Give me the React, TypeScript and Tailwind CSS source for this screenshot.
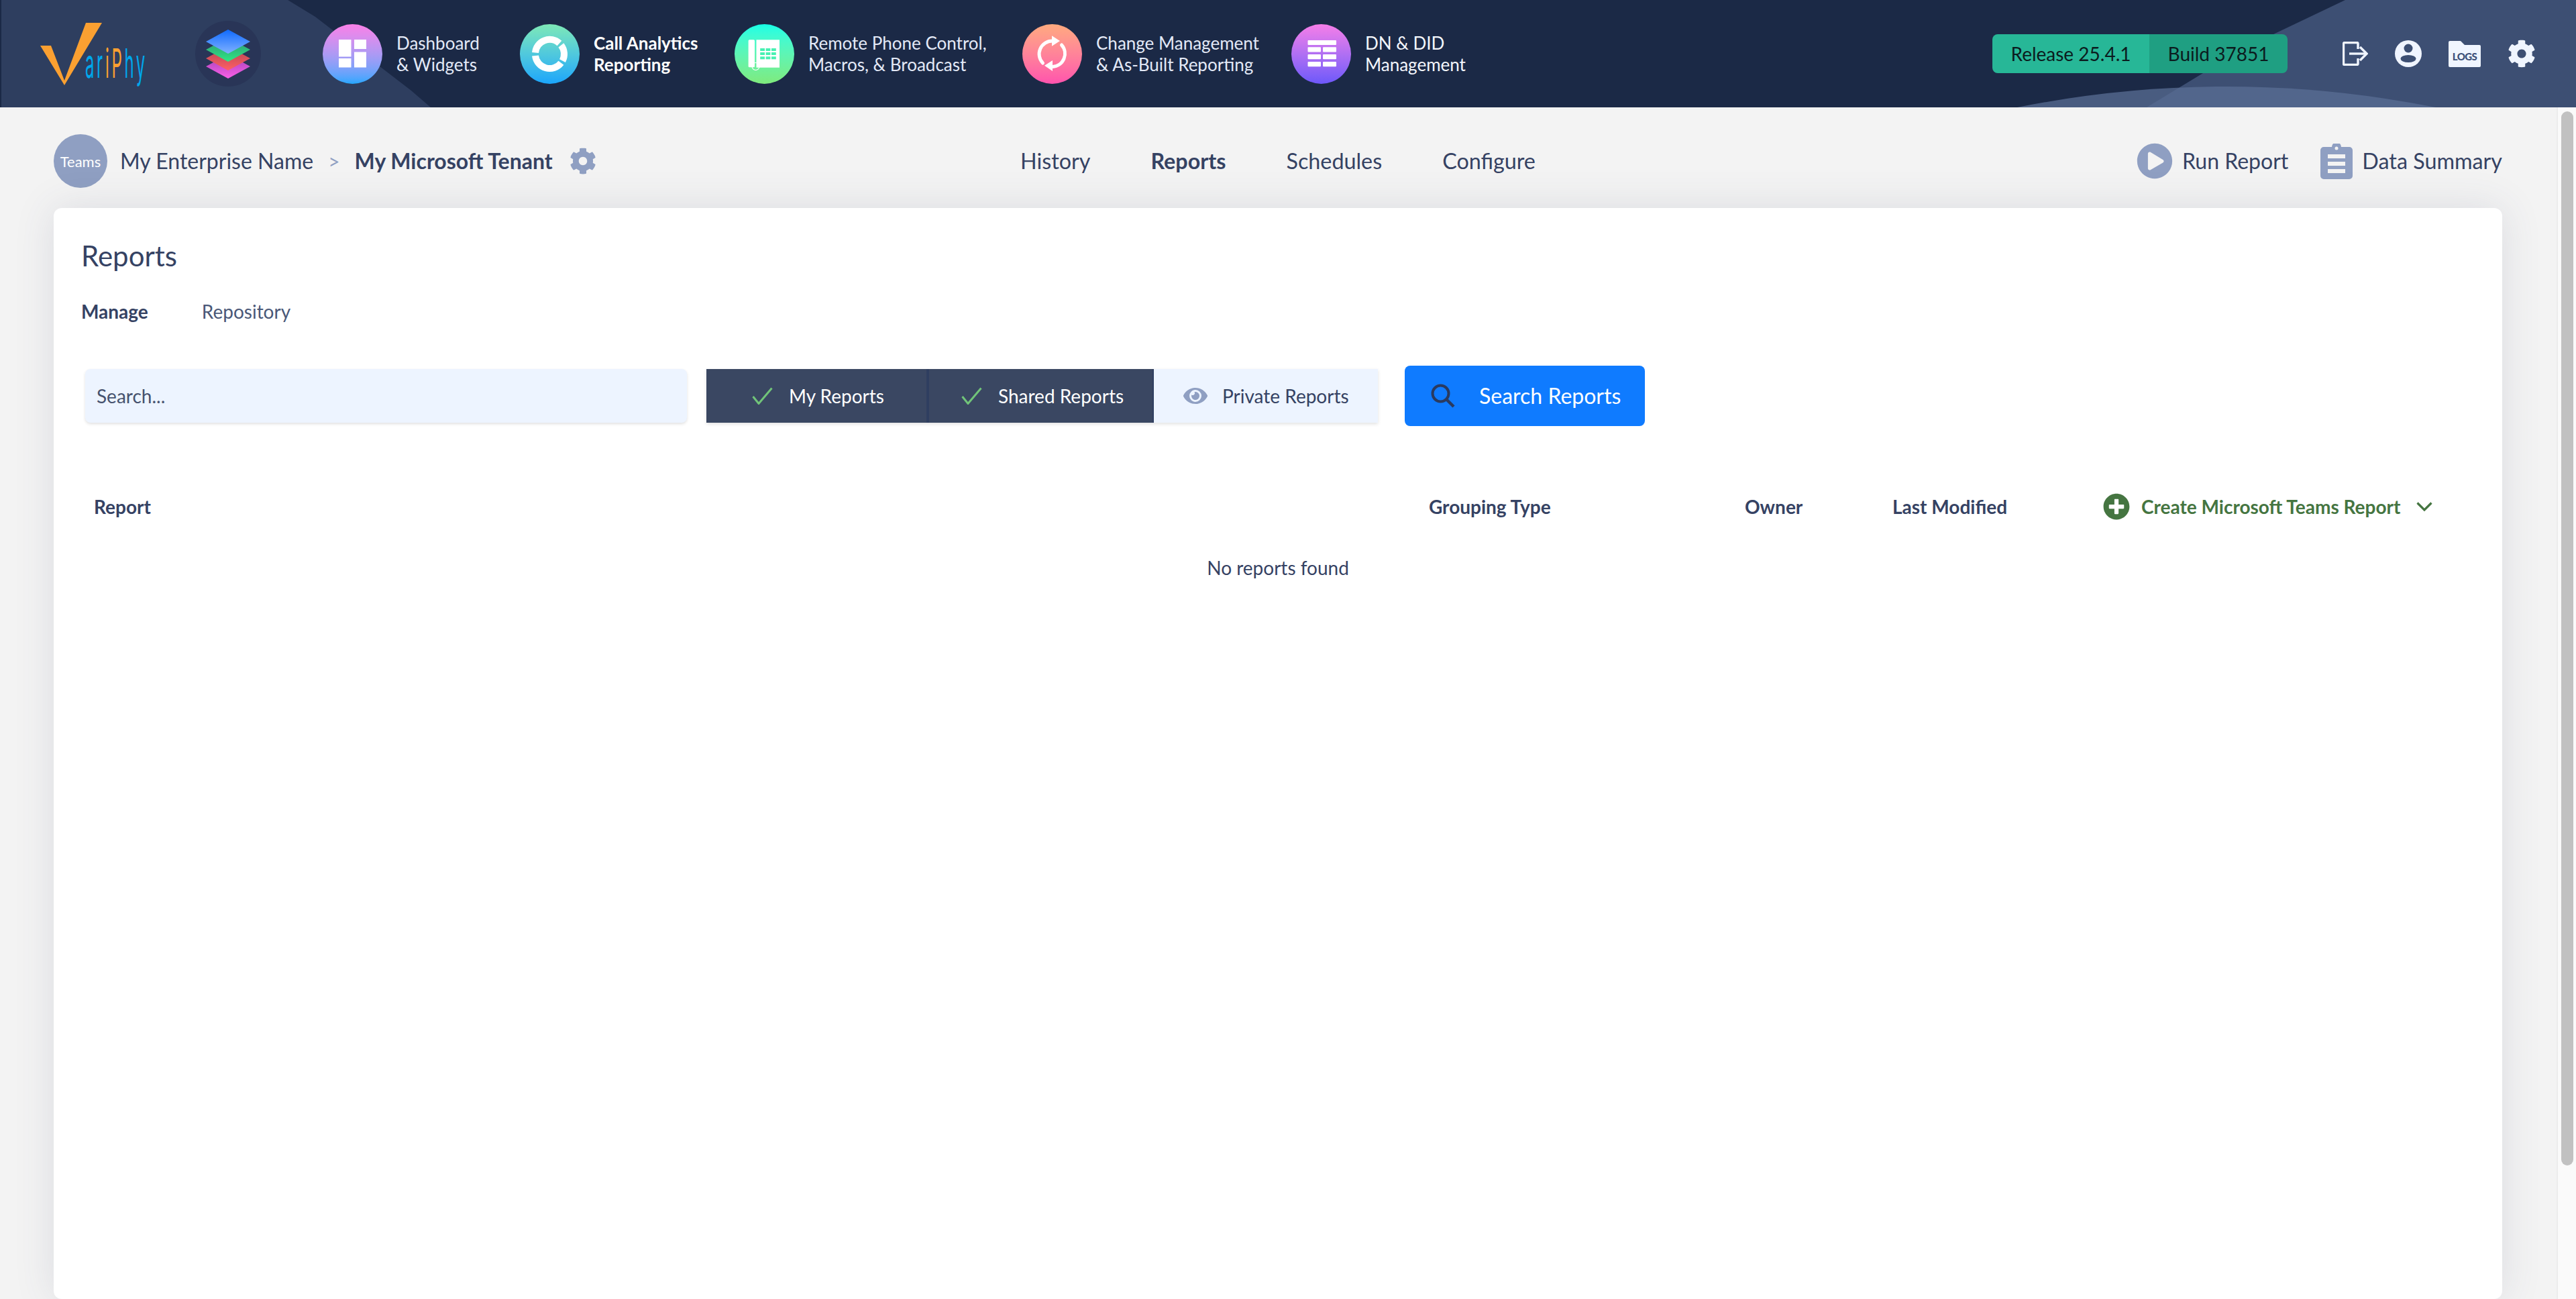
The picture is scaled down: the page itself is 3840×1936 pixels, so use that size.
import { ReactNode } from "react";
import { FaCog, FaEye, FaPlayCircle, FaPlusCircle } from "react-icons/fa";

function DashboardIcon() {
  return (
    <svg viewBox="0 0 89 89" className="w-full h-full" fill="#fff">
      <rect x="24" y="23" width="18.5" height="25.5" />
      <rect x="24" y="51" width="18.5" height="13.5" />
      <rect x="47" y="23" width="18" height="14" />
      <rect x="47" y="41.5" width="18" height="23" />
    </svg>
  );
}

function AnalyticsIcon() {
  return (
    <svg viewBox="0 0 89 89" className="w-full h-full" fill="none" stroke="#fff" strokeWidth="10">
      <path d="M23 42.5A21.5 21.5 0 0 1 58.9 28.5" />
      <path d="M61.4 31.3A21.5 21.5 0 0 1 63.5 54.6" />
      <path d="M61.4 57.7A21.5 21.5 0 0 1 23 47" />
    </svg>
  );
}

function PhoneIcon() {
  const cols = [38.2, 46.6, 55];
  const rows = [36, 42, 48.3];
  return (
    <svg viewBox="0 0 89 89" className="w-full h-full">
      <circle cx="31.5" cy="63" r="5.5" fill="none" stroke="#fff" strokeWidth="1.2" />
      <rect x="20.6" y="23.3" width="9.4" height="41" rx="1.5" fill="#fff" />
      <rect x="32.5" y="23.3" width="34.5" height="41.4" fill="#fff" />
      {rows.map((y) =>
        cols.map((x) => <rect key={`${x}-${y}`} x={x} y={y} width="6.8" height="4" fill="#47f1b2" />),
      )}
    </svg>
  );
}

function SyncIcon() {
  return (
    <svg viewBox="0 0 89 89" className="w-full h-full" fill="#fff">
      <path d="M45 25A19.5 19.5 0 0 0 30.5 58" fill="none" stroke="#fff" strokeWidth="5" strokeLinecap="round" />
      <path d="M45 63.5A19.5 19.5 0 0 0 58.5 31" fill="none" stroke="#fff" strokeWidth="5" strokeLinecap="round" />
      <polygon points="44,17.3 56,25 44,32.7" />
      <polygon points="45,54 33,61.7 45,70" />
    </svg>
  );
}

function TableIcon() {
  return (
    <svg viewBox="0 0 89 89" className="w-full h-full" fill="#fff">
      <rect x="24.5" y="24" width="42.5" height="7" rx="1" />
      {[34.3, 45, 56].map((y) => (
        <g key={y}>
          <rect x="24.5" y={y} width="19.5" height="7.3" rx="1" />
          <rect x="47" y={y} width="20" height="7.3" rx="1" />
        </g>
      ))}
    </svg>
  );
}

const modules: { icon: ReactNode; gradient: string; lines: string[]; width: string; text: string }[] = [
  {
    icon: <DashboardIcon />,
    gradient: "from-[#fa7fe8] to-[#1fa7ff]",
    lines: ["Dashboard", "& Widgets"],
    width: "w-[294px]",
    text: "text-[#e3e9f7]",
  },
  {
    icon: <AnalyticsIcon />,
    gradient: "from-[#7ee8b6] to-[#1aa5fb]",
    lines: ["Call Analytics", "Reporting"],
    width: "w-[320px]",
    text: "text-white font-bold",
  },
  {
    icon: <PhoneIcon />,
    gradient: "from-[#12ffe6] to-[#7fea7c]",
    lines: ["Remote Phone Control,", "Macros, & Broadcast"],
    width: "w-[429px]",
    text: "text-[#e3e9f7]",
  },
  {
    icon: <SyncIcon />,
    gradient: "from-[#ffaa7e] to-[#ff52ad]",
    lines: ["Change Management", "& As-Built Reporting"],
    width: "w-[401px]",
    text: "text-[#e3e9f7]",
  },
  {
    icon: <TableIcon />,
    gradient: "from-[#f67de8] to-[#6d57fa]",
    lines: ["DN & DID", "Management"],
    width: "w-[260px]",
    text: "text-[#f3f6fc]",
  },
];

function HeaderArt() {
  return (
    <svg viewBox="0 0 3840 160" className="absolute inset-0 w-full h-full">
      <polygon points="2,0 429,0 470,25 613,135 642,160 2,160" fill="#2e3e5f" />
      <polygon points="3496,0 3840,0 3840,160 3200,160 3284,109 3389,51" fill="#3d4f73" />
      <path d="M3007 160Q3319 98 3631 160Z" fill="#5a6d94" fillOpacity="0.75" />
    </svg>
  );
}

function Logo() {
  return (
    <div className="relative w-[152px] h-[93px] shrink-0">
      <svg viewBox="0 0 152 93" className="absolute inset-0 w-full h-full">
        <polygon points="0,34 16,34 36,86 68,0 92,0 36,93" fill="#fba031" />
      </svg>
      <div className="absolute left-[67px] top-[30px] origin-left scale-x-[0.4] whitespace-nowrap [font-family:Inter,sans-serif] font-normal text-[60px] leading-[60px] tracking-[9px] text-[#00a7ec]">
        ar<span className="text-[#fba031]">iP</span>hy
      </div>
    </div>
  );
}

function StackIcon() {
  return (
    <div className="w-[98px] h-[98px] rounded-full bg-[#293557] shrink-0">
      <svg viewBox="0 0 98 98" className="w-full h-full">
        <defs>
          <linearGradient id="st1" x1="0" y1="0" x2="0" y2="1">
            <stop offset="0" stopColor="#0f6aff" />
            <stop offset="1" stopColor="#80b1ff" />
          </linearGradient>
          <linearGradient id="st2" x1="0" y1="0" x2="0" y2="1">
            <stop offset="0" stopColor="#2f8f70" />
            <stop offset="1" stopColor="#2fe884" />
          </linearGradient>
          <linearGradient id="st3" x1="0" y1="0" x2="0" y2="1">
            <stop offset="0" stopColor="#b0434f" />
            <stop offset="1" stopColor="#ff5f66" />
          </linearGradient>
          <linearGradient id="st4" x1="0" y1="0" x2="0" y2="1">
            <stop offset="0" stopColor="#9f3fb5" />
            <stop offset="1" stopColor="#fa60e8" />
          </linearGradient>
        </defs>
        <polygon points="49,50 82,68 49,86 16,68" fill="url(#st4)" />
        <polygon points="49,38 82,56 49,74 16,56" fill="url(#st3)" />
        <polygon points="49,25 82,43 49,61 16,43" fill="url(#st2)" />
        <polygon points="49,13 82,31 49,49 16,31" fill="url(#st1)" />
      </svg>
    </div>
  );
}

function ExitIcon() {
  return (
    <svg viewBox="0 0 38 36" className="w-[38px] h-[36px]" fill="none" stroke="#f0f5ff" strokeWidth="3.4">
      <path d="M23 11V3a1.5 1.5 0 0 0-1.5-1.5H3A1.5 1.5 0 0 0 1.5 3v30A1.5 1.5 0 0 0 3 34.5h18.5A1.5 1.5 0 0 0 23 33v-8" />
      <path d="M10 18h25" />
      <path d="M26 8l10 10-10 10" />
    </svg>
  );
}

function UserIcon() {
  return (
    <svg viewBox="0 0 40 40" className="w-[40px] h-[40px]">
      <defs>
        <clipPath id="disc">
          <circle cx="20" cy="20" r="20" />
        </clipPath>
      </defs>
      <circle cx="20" cy="20" r="20" fill="#f0f5ff" />
      <circle cx="20" cy="12" r="6.5" fill="#3d4f73" />
      <ellipse cx="20" cy="27.5" rx="11.5" ry="5.5" fill="#3d4f73" clipPath="url(#disc)" />
    </svg>
  );
}

function LogsIcon() {
  return (
    <svg viewBox="0 0 48 39" className="w-[48px] h-[39px]">
      <path
        d="M2 0h15c1 0 1.500.5 2.500 1.500L24 6h22a2 2 0 0 1 2 2v29a2 2 0 0 1-2 2H2a2 2 0 0 1-2-2V2a2 2 0 0 1 2-2z"
        fill="#f0f5ff"
      />
      <text
        x="24"
        y="28.500"
        textAnchor="middle"
        fontFamily="Lato, sans-serif"
        fontWeight="900"
        fontSize="15"
        letterSpacing="-0.6"
        fill="#3d5079"
      >
        LOGS
      </text>
    </svg>
  );
}

function ClipboardIcon() {
  return (
    <svg viewBox="0 0 48 53" className="w-[48px] h-[53px]" fill="#8f9fc2">
      <path d="M5 5h12a7 7 0 0 1 14 0h12a5 5 0 0 1 5 5v38a5 5 0 0 1-5 5H5a5 5 0 0 1-5-5V10a5 5 0 0 1 5-5z" />
      <circle cx="24" cy="7" r="2.500" fill="#f3f3f3" />
      <rect x="11" y="16" width="26" height="6" fill="#f3f3f3" />
      <rect x="11" y="27" width="26" height="6" fill="#f3f3f3" />
      <rect x="11" y="38" width="26" height="6" fill="#f3f3f3" />
    </svg>
  );
}

function CheckMark() {
  return (
    <svg viewBox="0 0 31 26" className="w-[31px] h-[26px] shrink-0" fill="none" stroke="#71c479" strokeWidth="3">
      <path d="M1.500 14L10 24.500 29.500 1.500" />
    </svg>
  );
}

function SearchGlass() {
  return (
    <svg viewBox="0 0 36 36" className="w-[36px] h-[36px] shrink-0" fill="none" stroke="#2a3a5f" strokeWidth="4">
      <circle cx="14.500" cy="14.500" r="12" />
      <path d="M23 23l11 11" strokeWidth="4.500" />
    </svg>
  );
}

function Chevron() {
  return (
    <svg viewBox="0 0 24 14" className="w-[24px] h-[14px]" fill="none" stroke="#457541" strokeWidth="3.200">
      <path d="M1.500 1.500L12 12 22.500 1.500" />
    </svg>
  );
}

export default function App() {
  return (
    <div className="h-screen w-full flex flex-col overflow-hidden bg-[#f3f3f3] [font-family:Lato,sans-serif] text-[#354263]">
      <header className="relative h-[160px] shrink-0 bg-[#1b2946] flex items-center pl-[60px] pr-[60px]">
        <HeaderArt />
        <div className="relative flex items-center w-full">
          <Logo />
          <div className="ml-[79px]">
            <StackIcon />
          </div>
          <nav className="ml-[92px] flex items-center">
            {modules.map((m) => (
              <div key={m.lines[0]} className={`flex items-center gap-[21px] ${m.width}`}>
                <div className={`w-[89px] h-[89px] rounded-full bg-linear-to-b shrink-0 ${m.gradient}`}>{m.icon}</div>
                <div className={`text-[26px] leading-[32px] whitespace-nowrap ${m.text}`}>
                  <div>{m.lines[0]}</div>
                  <div>{m.lines[1]}</div>
                </div>
              </div>
            ))}
          </nav>
          <div className="ml-auto flex items-center">
            <div className="flex h-[58px] rounded-[8px] overflow-hidden text-[28px] text-[#0b1c1e]">
              <div className="w-[234px] bg-[#27b797] flex items-center justify-center">Release 25.4.1</div>
              <div className="w-[206px] bg-[#1f9f82] flex items-center justify-center">Build 37851</div>
            </div>
            <div className="ml-[82px] flex items-center">
              <ExitIcon />
              <div className="ml-[40px]">
                <UserIcon />
              </div>
              <div className="ml-[40px]">
                <LogsIcon />
              </div>
              <FaCog className="ml-[40px] text-[42px] text-[#f0f5ff]" />
            </div>
          </div>
        </div>
      </header>

      <div className="flex-1 min-h-0 flex">
        <main className="flex-1 min-w-0 flex flex-col pr-[81px] pl-[80px]">
          <div className="h-[150px] shrink-0 pt-[10px] flex items-center text-[32.3px]">
            <div className="w-[1441px] shrink-0 flex items-center">
              <div className="w-[80px] h-[80px] rounded-full bg-[#8f9fc2] text-white text-[22px] flex items-center justify-center">
                Teams
              </div>
              <span className="ml-[19px] text-[32px]">My Enterprise Name</span>
              <span className="ml-[22px] text-[#8f9fc2] text-[30px]">&gt;</span>
              <span className="ml-[22px] font-bold text-[32px]">My Microsoft Tenant</span>
              <FaCog className="ml-[25px] text-[40px] text-[#8f9fc2]" />
            </div>
            <div className="flex items-center gap-[90px]">
              <span>History</span>
              <span className="font-bold">Reports</span>
              <span>Schedules</span>
              <span>Configure</span>
            </div>
            <div className="ml-auto flex items-center">
              <FaPlayCircle className="text-[54px] text-[#8f9fc2]" />
              <span className="ml-[14px] text-[32px]">Run Report</span>
              <div className="ml-[48px]">
                <ClipboardIcon />
              </div>
              <span className="ml-[14px]">Data Summary</span>
            </div>
          </div>

          <section className="flex-1 min-h-0 bg-white rounded-[12px] shadow-[0_0_60px_rgba(60,70,110,0.13)] px-[41px] pt-[50px]">
            <h1 className="text-[42px] leading-[42px]">Reports</h1>
            <div className="mt-[45px] flex items-center gap-[80px] text-[28px] leading-[34px]">
              <span className="font-bold">Manage</span>
              <span className="text-[#4a5878]">Repository</span>
            </div>

            <div className="mt-[64px] flex items-center">
              <div className="ml-[6px] w-[897px] h-[80px] rounded-[8px] bg-[#edf4ff] shadow-[0_2px_4px_rgba(0,0,0,0.12)] flex items-center pl-[17px] text-[28px] text-[#46526e]">
                Search...
              </div>
              <div className="ml-[29px] flex h-[80px] text-[28px] shadow-[0_2px_5px_rgba(0,0,0,0.12)]">
                <div className="w-[332px] bg-[#3a4762] border-r-4 border-[#2f3e60] text-white flex items-center pl-[68px] gap-[24px]">
                  <CheckMark />
                  My Reports
                </div>
                <div className="w-[335px] bg-[#3a4762] border-r-2 border-[#2f3e60] text-white flex items-center pl-[48px] gap-[24px]">
                  <CheckMark />
                  Shared Reports
                </div>
                <div className="w-[334px] bg-[#edf4ff] flex items-center pl-[44px] gap-[22px]">
                  <FaEye className="text-[36px] text-[#8f9fc2]" />
                  Private Reports
                </div>
              </div>
              <div className="ml-[40px] w-[358px] h-[90px] rounded-[8px] bg-[#0f7bff] text-white text-[32px] flex items-center pl-[39px] gap-[36px]">
                <SearchGlass />
                Search Reports
              </div>
            </div>

            <div className="mt-[90px] h-[60px] pl-[19px] grid grid-cols-[1990px_471px_220px_314px_1fr] items-center text-[28px] font-bold">
              <span>Report</span>
              <span>Grouping Type</span>
              <span>Owner</span>
              <span>Last Modified</span>
              <div className="flex items-center text-[#457541]">
                <FaPlusCircle className="text-[40px]" />
                <span className="ml-[17px]">Create Microsoft Teams Report</span>
                <div className="ml-[24px]">
                  <Chevron />
                </div>
              </div>
            </div>
            <p className="mt-[44px] text-center text-[28px] leading-[34px]">No reports found</p>
          </section>
        </main>

        <div className="w-[29px] shrink-0 bg-[#fafafa] border-l-2 border-[#ececec] pl-[5px] pr-[4px] pt-[6px]">
          <div className="h-[1571px] rounded-full bg-[#c1c1c1]" />
        </div>
      </div>
    </div>
  );
}
